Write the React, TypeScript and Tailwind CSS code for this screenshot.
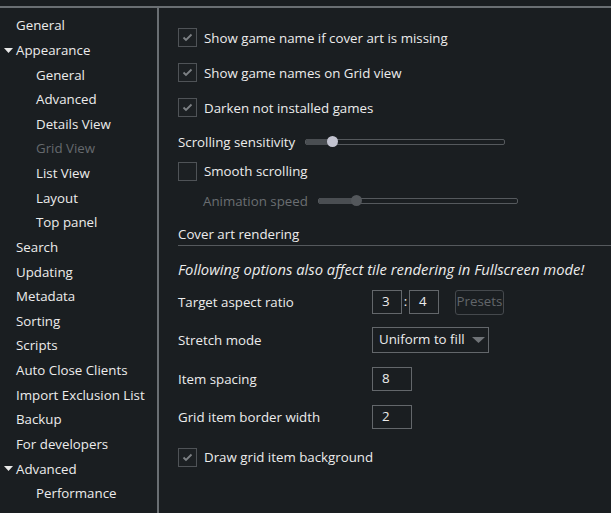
import React from "react";

const font = { fontFamily: '"Open Sans", "Noto Sans", sans-serif' };

function Tri({ className = "", w = 9, h = 5 }: { className?: string; w?: number; h?: number }) {
  return (
    <svg width={w} height={h} viewBox={`0 0 ${w} ${h}`} className={className}>
      <path d={`M0 0 L${w} 0 L${w / 2} ${h} Z`} fill="currentColor" />
    </svg>
  );
}

function NavItem({ label, level = 0, expanded, dim }: { label: string; level?: number; expanded?: boolean; dim?: boolean }) {
  return (
    <div className={`h-[24.63px] flex items-center ${level === 1 ? "pl-[36px]" : "pl-[16px]"} relative`}>
      {expanded && <Tri className="absolute left-[4px] top-[10px] text-[#e8e8e8]" />}
      <span className={`relative top-[1px] ${dim ? "text-[#65696d]" : "text-[#ececec]"}`}>{label}</span>
    </div>
  );
}

function CheckBox({ checked }: { checked?: boolean }) {
  return (
    <div className="w-[19px] h-[19px] border border-[#4f5357] bg-[#1c2023] flex items-center justify-center shrink-0">
      {checked && (
        <svg width="11" height="9" viewBox="0 0 11 9">
          <path d="M1.5 4.5 L4 7 L9.5 1.5" stroke="#7d8185" strokeWidth="1.8" fill="none" />
        </svg>
      )}
    </div>
  );
}

function CheckRow({ label, checked, h }: { label: string; checked?: boolean; h: string }) {
  return (
    <div className={`${h} flex items-center gap-[7px]`}>
      <CheckBox checked={checked} />
      <span className="relative top-[1px] text-[#ececec]">{label}</span>
    </div>
  );
}

function Slider({ pos, disabled }: { pos: number; disabled?: boolean }) {
  return (
    <div className="relative w-[200px] h-[6px] border border-[#55595d] rounded-[2px]">
      <div className="absolute left-0 top-[-1px] h-[6px] bg-[#4a4e52] rounded-[2px]" style={{ width: pos }} />
      <div
        className={`absolute top-[-4px] w-[11px] h-[11px] rounded-full ${disabled ? "bg-[#53575b]" : "bg-[#c2c3d0]"}`}
        style={{ left: pos - 3 }}
      />
    </div>
  );
}

function Input({ value, w }: { value: string; w: string }) {
  return (
    <div className={`${w} h-[24px] border border-[#63676b] flex items-center pl-[9px] text-[#ececec]`}>{value}</div>
  );
}

function Label({ children, w = "w-[194px]", cls = "text-[#ececec]" }: { children: React.ReactNode; w?: string; cls?: string }) {
  return <span className={`relative top-[1px] ${w} ${cls}`}>{children}</span>;
}

export default function App() {
  const nav: { label: string; level?: number; expanded?: boolean; dim?: boolean }[] = [
    { label: "General" },
    { label: "Appearance", expanded: true },
    { label: "General", level: 1 },
    { label: "Advanced", level: 1 },
    { label: "Details View", level: 1 },
    { label: "Grid View", level: 1, dim: true },
    { label: "List View", level: 1 },
    { label: "Layout", level: 1 },
    { label: "Top panel", level: 1 },
    { label: "Search" },
    { label: "Updating" },
    { label: "Metadata" },
    { label: "Sorting" },
    { label: "Scripts" },
    { label: "Auto Close Clients" },
    { label: "Import Exclusion List" },
    { label: "Backup" },
    { label: "For developers" },
    { label: "Advanced", expanded: true },
    { label: "Performance", level: 1 },
  ];
  return (
    <div className="w-[611px] h-[513px] bg-[#1a1e21] overflow-hidden text-[13.3px] pt-[6px] whitespace-nowrap" style={font}>
      <div className="border-t-2 border-[#6a6f73] flex h-[507px]">
        <div className="w-[157px] shrink-0 pt-[5px]">
          {nav.map((n, i) => (
            <NavItem key={i} {...n} />
          ))}
        </div>
        <div className="w-[2px] bg-[#6a6f73] shrink-0" />
        <div className="flex-1 pl-[19px] pt-[12px] flex flex-col">
          <CheckRow label="Show game name if cover art is missing" checked h="h-[35px]" />
          <CheckRow label="Show game names on Grid view" checked h="h-[35px]" />
          <CheckRow label="Darken not installed games" checked h="h-[35px]" />
          <div className="h-[34px] flex items-center">
            <Label w="w-[127px]">Scrolling sensitivity</Label>
            <Slider pos={24} />
          </div>
          <CheckRow label="Smooth scrolling" h="h-[24px]" />
          <div className="h-[36px] flex items-center pl-[25px]">
            <Label w="w-[115px]" cls="text-[#6a6e72]">Animation speed</Label>
            <Slider pos={35} disabled />
          </div>
          <div className="pt-[3px] border-b border-[#55595d]">
            <div className="h-[23px] flex items-center">
              <Label w="">Cover art rendering</Label>
            </div>
          </div>
          <div className="h-[44px] flex items-center italic text-[14.8px] text-[#ececec]">
            <span className="relative top-[1px]">Following options also affect tile rendering in Fullscreen mode!</span>
          </div>
          <div className="h-[24px] flex items-center">
            <Label>Target aspect ratio</Label>
            <Input value="3" w="w-[30px]" />
            <span className="text-[#ececec] w-[7px] text-center">:</span>
            <Input value="4" w="w-[30px]" />
            <div className="ml-[16px] w-[49px] h-[25px] border border-[#45494d] rounded-[3px] flex items-center justify-center text-[#62666a]">
              Presets
            </div>
          </div>
          <div className="h-[52px] flex items-center">
            <Label>Stretch mode</Label>
            <div className="w-[117px] h-[26px] border border-[#63676b] flex items-center pl-[6px] text-[#ececec]">
              Uniform to fill
              <Tri className="ml-[7px] text-[#6f7377]" w={13} h={6} />
            </div>
          </div>
          <div className="h-[26px] flex items-center">
            <Label>Item spacing</Label>
            <Input value="8" w="w-[40px]" />
          </div>
          <div className="h-[50px] flex items-center">
            <Label>Grid item border width</Label>
            <Input value="2" w="w-[40px]" />
          </div>
          <CheckRow label="Draw grid item background" checked h="h-[30px]" />
        </div>
      </div>
    </div>
  );
}
